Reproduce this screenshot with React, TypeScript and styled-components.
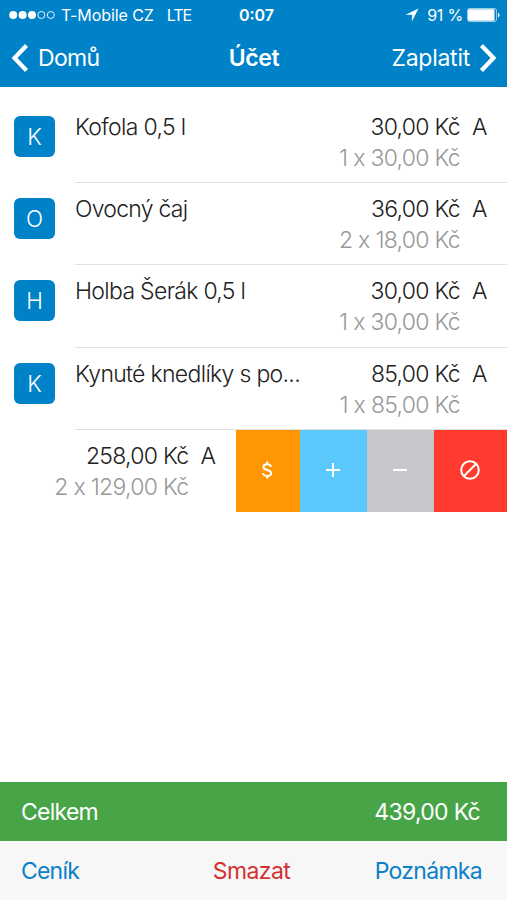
import React from "react";
import styled, { createGlobalStyle } from "styled-components";

const Global = createGlobalStyle`
  * { box-sizing: border-box; }
  body { margin: 0; background: #fff; }
`;

const Screen = styled.main`
  display: flex;
  flex-direction: column;
  width: 507px;
  height: 900px;
  overflow: hidden;
  background: #fff;
  color: #222;
  font-family: Inter, "Liberation Sans", sans-serif;
`;

const Header = styled.header`
  height: 87px;
  flex: none;
  background: #0082c8;
  color: #fff;
`;

const StatusBar = styled.div`
  display: grid;
  grid-template-columns: 1fr auto 1fr;
  align-items: center;
  height: 30px;
  padding: 0 7px 0 9px;
  font-size: 16px;
  line-height: 30px;
`;

const Carrier = styled.div`
  display: flex;
  align-items: center;
  white-space: nowrap;
`;

const SignalDots = styled.svg`
  width: 47px;
  height: 10px;
  margin-right: 5px;
`;

const StatusText = styled.span<{ $track?: number; $gap?: number }>`
  letter-spacing: ${(p) => p.$track ?? 0}px;
  margin-right: ${(p) => p.$gap ?? 0}px;
`;

const Clock = styled.div`
  font-weight: 600;
  letter-spacing: 0;
  padding-left: 4px;
`;

const Power = styled(Carrier)`
  justify-content: flex-end;
`;

const NavBar = styled.nav`
  display: grid;
  grid-template-columns: 1fr auto 1fr;
  align-items: center;
  height: 57px;
  padding: 0 10px 2px 11px;
`;

const NavButton = styled.button<{ $end?: boolean }>`
  display: flex;
  align-items: center;
  justify-content: ${(p) => (p.$end ? "flex-end" : "flex-start")};
  gap: 9px;
  padding: 0;
  border: 0;
  background: none;
  color: inherit;
  font: 400 23px/30px Inter, sans-serif;
  letter-spacing: ${(p) => (p.$end ? "-0.25px" : "-0.7px")};
`;

const Chevron = styled.svg`
  width: 18px;
  height: 28px;
`;

const Title = styled.h1`
  margin: 0;
  font-size: 23px;
  line-height: 30px;
  font-weight: 600;
  letter-spacing: -0.4px;
`;

const List = styled.ul`
  flex: 1;
  margin: 0;
  padding: 14px 0 0;
  list-style: none;
`;

const Row = styled.li`
  display: flex;
  height: 82.2px;
  padding-left: 14px;
`;

const Badge = styled.div`
  flex: none;
  width: 41px;
  height: 41px;
  margin: 15px 20px 0 0;
  border-radius: 6px;
  background: #0082c8;
  color: #fff;
  font-size: 22.5px;
  font-weight: 300;
  line-height: 42px;
  text-align: center;
`;

const RowBody = styled.div`
  display: flex;
  flex: 1;
  justify-content: space-between;
  padding: 11px 20px 0 0;
  border-bottom: 1.5px solid #e1e1e3;
  font-size: 23px;
  font-weight: 300;
  line-height: 31px;
  white-space: nowrap;
`;

const Name = styled.div<{ $track: number }>`
  letter-spacing: ${(p) => p.$track}px;
`;

const Amounts = styled.div`
  display: grid;
  grid-template-columns: auto 15px;
  column-gap: 12px;
  align-content: start;
  text-align: right;
`;

const Price = styled.span`
  letter-spacing: -0.7px;
`;

const UnitPrice = styled(Price)`
  color: #999;
`;

const SwipedRow = styled.li`
  display: flex;
  height: 82.5px;
`;

const SwipedBody = styled.div`
  display: flex;
  flex: 1;
  justify-content: flex-end;
  padding: 11px 20px 0 0;
  font-size: 23px;
  font-weight: 300;
  line-height: 31px;
  white-space: nowrap;
`;

const Action = styled.button<{ $color: string; $width: number }>`
  display: flex;
  align-items: center;
  justify-content: center;
  width: ${(p) => p.$width}px;
  padding: 0 1px 2px 0;
  border: 0;
  background: ${(p) => p.$color};
`;

const ActionIcon = styled.svg`
  width: 24px;
  height: 24px;
  fill: none;
  stroke: #fff;
  stroke-width: 2;
`;

const Total = styled.section`
  display: flex;
  flex: none;
  align-items: center;
  justify-content: space-between;
  height: 59.5px;
  padding: 1px 27px 0 21px;
  background: #48a547;
  color: #fff;
  font-size: 23px;
`;

const Track = styled.span<{ $track: number }>`
  letter-spacing: ${(p) => p.$track}px;
`;

const Toolbar = styled.footer`
  display: grid;
  grid-template-columns: 1fr auto 1fr;
  flex: none;
  align-items: center;
  height: 59px;
  padding: 1px 25px 0 21px;
  background: #f7f7f7;
`;

const ToolButton = styled.button<{ $danger?: boolean; $align?: string; $track: number }>`
  padding: 0;
  border: 0;
  background: none;
  color: ${(p) => (p.$danger ? "#d4302f" : "#0a80c8")};
  font: 400 23px/30px Inter, sans-serif;
  letter-spacing: ${(p) => p.$track}px;
  text-align: ${(p) => p.$align ?? "center"};
`;

const items = [
  { letter: "K", name: "Kofola 0,5 l", track: -0.65, price: "30,00 Kč", unit: "1 x 30,00 Kč" },
  { letter: "O", name: "Ovocný čaj", track: -0.75, price: "36,00 Kč", unit: "2 x 18,00 Kč" },
  { letter: "H", name: "Holba Šerák 0,5 l", track: -0.68, price: "30,00 Kč", unit: "1 x 30,00 Kč" },
  { letter: "K", name: "Kynuté knedlíky s po...", track: -0.68, price: "85,00 Kč", unit: "1 x 85,00 Kč" },
];

function PriceBlock({ price, unit }: { price: string; unit: string }) {
  return (
    <Amounts>
      <Price>{price}</Price>
      <span>A</span>
      <UnitPrice>{unit}</UnitPrice>
    </Amounts>
  );
}

export default function App() {
  return (
    <Screen>
      <Global />
      <Header>
        <StatusBar>
          <Carrier>
            <SignalDots viewBox="0 0 47 10">
              {[4.2, 13.6, 23].map((x) => (
                <circle key={x} cx={x} cy="5" r="4" fill="#fff" />
              ))}
              {[32.4, 41.8].map((x) => (
                <circle key={x} cx={x} cy="5" r="3.5" fill="none" stroke="#fff" strokeWidth="0.9" />
              ))}
            </SignalDots>
            <StatusText $track={-0.08} $gap={13}>T-Mobile CZ</StatusText>
            <StatusText $track={-1.1}>LTE</StatusText>
          </Carrier>
          <Clock>0:07</Clock>
          <Power>
            <svg width="14" height="14" viewBox="0 0 14 14">
              <path d="M13.500 .5.500 6.700h6.400V13.500z" fill="#fff" />
            </svg>
            <StatusText $track={-0.2} $gap={4}>&nbsp; 91 %</StatusText>
            <svg width="33" height="14" viewBox="0 0 33 14">
              <rect x=".5" y=".5" width="29" height="13" rx="2" fill="none" stroke="#fff" strokeOpacity=".6" />
              <rect x="1" y="1.200" width="26.500" height="11.600" rx="1" fill="#fff" />
              <path d="M31 4.7c2 .7 2 3.9 0 4.6z" fill="#fff" />
            </svg>
          </Power>
        </StatusBar>
        <NavBar>
          <NavButton>
            <Chevron viewBox="0 0 18 28">
              <path d="M15.500 1.500 3.500 14l12 12.500" fill="none" stroke="#fff" strokeWidth="4.200" />
            </Chevron>
            Domů
          </NavButton>
          <Title>Účet</Title>
          <NavButton $end>
            Zaplatit
            <Chevron viewBox="0 0 18 28">
              <path d="M2.500 1.500 14.500 14l-12 12.500" fill="none" stroke="#fff" strokeWidth="4.200" />
            </Chevron>
          </NavButton>
        </NavBar>
      </Header>
      <List>
        {items.map((item) => (
          <Row key={item.name}>
            <Badge>{item.letter}</Badge>
            <RowBody>
              <Name $track={item.track}>{item.name}</Name>
              <PriceBlock price={item.price} unit={item.unit} />
            </RowBody>
          </Row>
        ))}
        <SwipedRow>
          <SwipedBody>
            <PriceBlock price="258,00 Kč" unit="2 x 129,00 Kč" />
          </SwipedBody>
          <Action $color="#ff9603" $width={64} aria-label="Cena">
            <ActionIcon viewBox="0 0 24 24">
              <path d="M16 9c-.2-1.700-1.600-2.800-3.800-2.800S8.400 7.300 8.400 8.900c0 3.800 7.800 2.400 7.800 6.300 0 1.600-1.600 2.700-4 2.700-2.300 0-4-1.100-4.200-2.900M12.200 3.500v3M12.200 17.500v3" />
            </ActionIcon>
          </Action>
          <Action $color="#5ac8fb" $width={67.5} aria-label="Přidat">
            <ActionIcon viewBox="0 0 24 24">
              <path d="M5 12h14M12 5v14" />
            </ActionIcon>
          </Action>
          <Action $color="#c7c6cc" $width={67} aria-label="Ubrat">
            <ActionIcon viewBox="0 0 24 24">
              <path d="M5 12h14" />
            </ActionIcon>
          </Action>
          <Action $color="#ff3b30" $width={73} aria-label="Zrušit">
            <ActionIcon viewBox="0 0 24 24">
              <circle cx="12" cy="12" r="8.800" />
              <path d="M5.800 18.200 18.200 5.800" />
            </ActionIcon>
          </Action>
        </SwipedRow>
      </List>
      <Total>
        <Track $track={-0.75}>Celkem</Track>
        <Track $track={-0.7}>439,00 Kč</Track>
      </Total>
      <Toolbar>
        <ToolButton $align="left" $track={-0.8}>Ceník</ToolButton>
        <ToolButton $danger $track={-0.6}>Smazat</ToolButton>
        <ToolButton $align="right" $track={-0.7}>Poznámka</ToolButton>
      </Toolbar>
    </Screen>
  );
}
